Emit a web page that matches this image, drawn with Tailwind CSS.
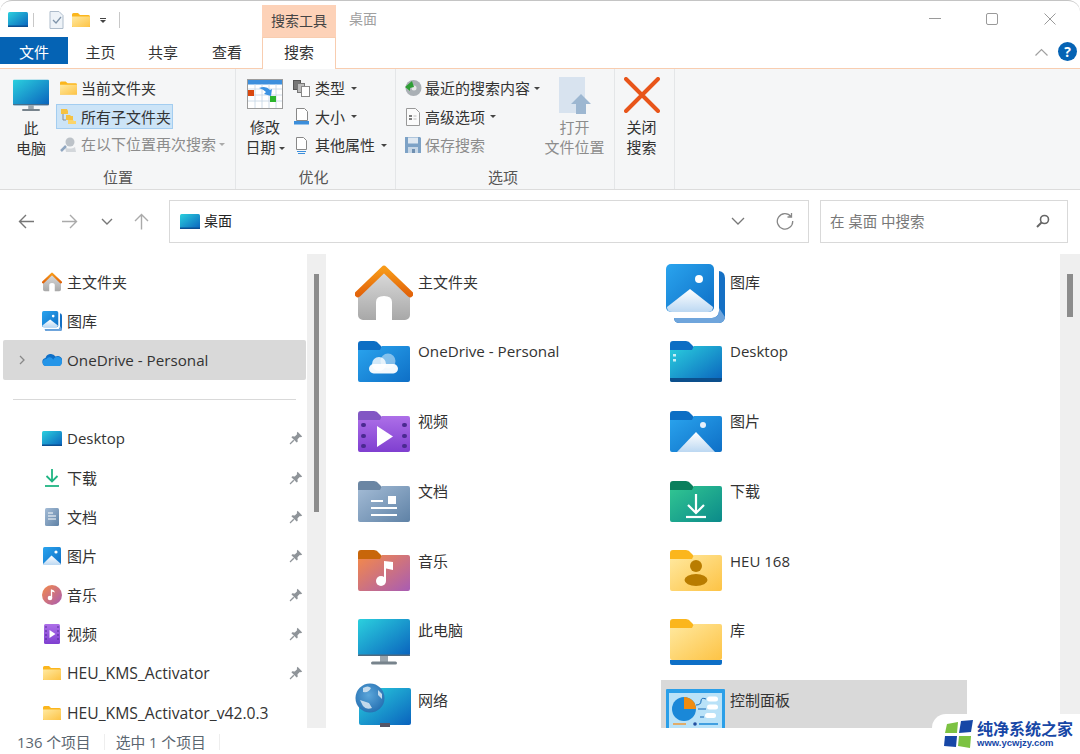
<!DOCTYPE html>
<html lang="zh-CN">
<head>
  <meta charset="UTF-8">
  <title>桌面</title>
  <script src="https://cdn.jsdelivr.net/npm/@tailwindcss/browser@4"></script>
</head>
<body class="bg-white">
  <!-- shared gradients and icons -->
  <svg class="absolute w-0 h-0">
    <defs>
      <linearGradient id="g-screen" x1="0" y1="0" x2="1" y2="1"><stop offset="0" stop-color="#2bd0de"/><stop offset="1" stop-color="#0a62bd"/></linearGradient>
      <linearGradient id="g-blue" x1="0" y1="0" x2="1" y2="1"><stop offset="0" stop-color="#2aa4ee"/><stop offset="1" stop-color="#0e6fc6"/></linearGradient>
      <linearGradient id="g-purple" x1="0" y1="0" x2="0" y2="1"><stop offset="0" stop-color="#ad6fe8"/><stop offset="1" stop-color="#7f3fd0"/></linearGradient>
      <linearGradient id="g-slate" x1="0" y1="0" x2="1" y2="1"><stop offset="0" stop-color="#a4bcd6"/><stop offset="1" stop-color="#5f82a6"/></linearGradient>
      <linearGradient id="g-music" x1="0" y1="0" x2="1" y2="1"><stop offset="0" stop-color="#f58a48"/><stop offset="1" stop-color="#a85cb4"/></linearGradient>
      <linearGradient id="g-green" x1="0" y1="0" x2="1" y2="1"><stop offset="0" stop-color="#32c792"/><stop offset="1" stop-color="#0b8a8a"/></linearGradient>
      <linearGradient id="g-yellow" x1="0" y1="0" x2="1" y2="1"><stop offset="0" stop-color="#ffe9a0"/><stop offset="1" stop-color="#fdc345"/></linearGradient>
      <linearGradient id="g-house" x1="0" y1="0" x2="0" y2="1"><stop offset="0" stop-color="#dcdcdc"/><stop offset="1" stop-color="#a8a8a8"/></linearGradient>
      <linearGradient id="g-roof" x1="0" y1="0" x2="0" y2="1"><stop offset="0" stop-color="#f79a18"/><stop offset="1" stop-color="#e2640a"/></linearGradient>
      <linearGradient id="g-mount" x1="0" y1="0" x2="0" y2="1"><stop offset="0" stop-color="#ffffff"/><stop offset="1" stop-color="#bcd8f2"/></linearGradient>
      <radialGradient id="g-globe" cx=".45" cy=".4" r=".7"><stop offset="0" stop-color="#5ba6da"/><stop offset="1" stop-color="#1f69ad"/></radialGradient>
      <symbol id="i-house" viewBox="0 0 58 56">
        <path d="M3 26 29 5l26 21v24a5 5 0 0 1-5 5H37V37q0-6-8-6t-8 6v18H8a5 5 0 0 1-5-5z" fill="url(#g-house)"/>
        <path d="M3 29 29 4l26 25" fill="none" stroke="url(#g-roof)" stroke-width="6.500" stroke-linecap="round" stroke-linejoin="round"/>
      </symbol>
      <symbol id="i-gallery" viewBox="0 0 59 59">
        <path d="M53 7q6 1 6 7v39a6 6 0 0 1-6 6H14q-6 0-6-5h38a7 7 0 0 0 7-7z" fill="#1570c4"/>
        <path d="M8 54h38a7 7 0 0 0 7-7v-3l6 9a6 6 0 0 1-6 6H14q-6 0-6-5z" fill="#6fa5dc"/>
        <rect x="0" y="0" width="48" height="48" rx="5" fill="url(#g-blue)"/>
        <path d="M1 43 24 25l23 18q0 5-5 5H6q-5 0-5-5z" fill="url(#g-mount)"/>
        <circle cx="33" cy="15" r="4" fill="#fff"/>
      </symbol>
      <symbol id="i-screen" viewBox="0 0 20 15">
        <rect width="20" height="15" rx="1.500" fill="url(#g-screen)"/>
        <rect y="13.500" width="20" height="1.500" fill="#0c4f92"/>
      </symbol>
      <symbol id="i-yellow" viewBox="0 0 18 14">
        <path d="M0 1.500A1.500 1.500 0 0 1 1.500 0H6l2 2h8.500A1.500 1.500 0 0 1 18 3.500V14H0z" fill="#fbb61d"/>
        <path d="M0 3.500h18V13a1 1 0 0 1-1 1H1a1 1 0 0 1-1-1z" fill="url(#g-yellow)"/>
      </symbol>
      <symbol id="i-pin" viewBox="0 0 14 14">
        <path d="M8.600.8 13.200 5.400 11.900 6.200 10.800 5.900 8.500 8.200 8.700 10.700 7.700 11.600 2.400 6.300 3.300 5.300 5.800 5.500 8.100 3.200 7.800 2.100zM4.300 8.700 5.300 9.700 1.400 13.400.6 12.600z" fill="#8f9499"/>
      </symbol>
      <symbol id="i-picture" viewBox="0 0 18 18">
        <rect width="18" height="18" rx="1.500" fill="url(#g-blue)"/>
        <path d="M0 17 8.500 8.500 18 17v1H0z" fill="url(#g-mount)"/>
        <circle cx="13" cy="5" r="1.600" fill="#fff"/>
      </symbol>
      <symbol id="i-monitor" viewBox="0 0 52 46">
        <rect width="52" height="37" rx="2" fill="url(#g-screen)"/>
        <rect y="35.500" width="52" height="1.500" fill="#4f6a80"/>
        <rect x="22" y="37" width="8" height="6" fill="#9aa5ad"/>
        <rect x="13" y="42.500" width="26" height="3" rx="1.500" fill="#77838c"/>
      </symbol>
    </defs>
  </svg>

  <div class="relative w-[1080px] h-[754px] overflow-hidden flex flex-col bg-white rounded-t-[12px] border-t border-[#c4c4c4] text-[15px] leading-[20px] text-[#333] font-['Open_Sans','Noto_Sans_CJK_SC',sans-serif]">

    <!-- title bar -->
    <div class="h-[36px] flex items-start">
      <div class="flex items-center h-[36px] pl-[8px] pt-[1px] w-[262px] shrink-0">
        <svg class="w-[20px] h-[15px]"><use href="#i-screen"/></svg>
        <div class="w-px h-[14px] bg-[#c8c8c8] ml-[5px]"></div>
        <svg class="w-[15px] h-[18px] ml-[15px]" viewBox="0 0 15 18">
          <path d="M1 .5h9l4 4v13H1z" fill="#eef3f8" stroke="#aebccb"/>
          <path d="m4 9 3 3 5-6" fill="none" stroke="#7f94aa" stroke-width="1.300"/>
        </svg>
        <svg class="w-[18px] h-[14px] ml-[8px]"><use href="#i-yellow"/></svg>
        <div class="ml-[10px] flex flex-col items-center gap-[1px] pt-[2px]">
          <div class="w-[6px] h-px bg-[#444]"></div>
          <div class="w-0 h-0 border-x-[3px] border-x-transparent border-t-[3px] border-t-[#444]"></div>
        </div>
        <div class="w-px h-[16px] bg-[#c8c8c8] ml-[13px]"></div>
      </div>
      <div class="w-[74px] h-[32px] mt-[4px] bg-[#fdd2b8] flex items-center justify-center text-[14px] text-[#444] shrink-0">搜索工具</div>
      <div class="ml-[13px] mt-[8px] text-[14px] text-[#a0a0a0]">桌面</div>
      <div class="ml-auto flex items-center h-[36px] pb-[1px]">
        <div class="w-[12px] h-px bg-[#9a9a9a]"></div>
        <div class="w-[12px] h-[12px] ml-[45px] border border-[#9a9a9a] rounded-[2px]"></div>
        <svg class="w-[12px] h-[12px] ml-[46px] mr-[24px]" viewBox="0 0 12 12"><path d="m.5.5 11 11m0-11-11 11" stroke="#9a9a9a" fill="none"/></svg>
      </div>
    </div>

    <!-- ribbon tabs -->
    <div class="h-[32px] flex items-start border-b border-[#f8cdb0] relative">
      <div class="w-[68px] h-[27px] bg-[#0563b4] text-white flex items-center justify-center pt-[2px] shrink-0">文件</div>
      <div class="w-[64px] h-[29px] flex items-center justify-center shrink-0 ml-[-1px]">
        <span class="ml-[3px]">主页</span>
      </div>
      <div class="w-[64px] h-[29px] flex items-center justify-center shrink-0">共享</div>
      <div class="w-[64px] h-[29px] flex items-center justify-center shrink-0">查看</div>
      <div class="w-[74px] h-[32px] bg-white border-x border-t border-[#f8cdb0] flex items-center justify-center pb-[3px] shrink-0 ml-[3px]">搜索</div>
      <div class="ml-auto flex items-center h-[31px] pb-[2px]">
        <svg class="w-[13px] h-[8px]" viewBox="0 0 13 8"><path d="M.5 7.500 6.500 1.500l6 6" fill="none" stroke="#a0a0a0" stroke-width="1.200"/></svg>
        <div class="w-[19px] h-[19px] rounded-full bg-[#0563b4] text-white font-bold text-[14px] flex items-center justify-center ml-[10px] mr-[3px]">?</div>
      </div>
    </div>

    <!-- ribbon -->
    <div class="h-[121px] bg-[#f5f6f7] border-b border-[#dcdcdc] flex text-[15px]">

      <!-- 位置 -->
      <div class="w-[236px] border-r border-[#e4e6e8] flex flex-col shrink-0">
        <div class="h-[98px] flex">
          <div class="w-[56px] pl-[6px] pt-[10px] flex flex-col items-center shrink-0">
            <svg class="w-[36px] h-[33px]" viewBox="0 0 52 46"><use href="#i-monitor"/></svg>
            <div class="mt-[6px] text-center leading-[20px]">此<br>电脑</div>
          </div>
          <div class="pt-[7px] flex flex-col">
            <div class="h-[24px] flex items-center pl-[4px]">
              <svg class="w-[17px] h-[14px]"><use href="#i-yellow"/></svg>
              <span class="ml-[4px]">当前文件夹</span>
            </div>
            <div class="h-[25px] w-[117px] mt-[4px] flex items-center pl-[3px] bg-[#cce4f7] border border-[#a3cdf0]">
              <svg class="w-[17px] h-[17px]" viewBox="0 0 17 17">
                <path d="M1 1h6l1 2H8v3H1z" fill="#f5c243"/><path d="M3 6v6h3" fill="none" stroke="#8c8c8c"/>
                <path d="M6 7h4l1 1h2v4H6z" fill="#f5c243"/><path d="M8 12h5l1 1h2v3H8z" fill="#fbd46a"/>
              </svg>
              <span class="ml-[4px] whitespace-nowrap text-[#333]">所有子文件夹</span>
            </div>
            <div class="h-[24px] mt-[3px] flex items-center pl-[4px] text-[#8c8c8c]">
              <svg class="w-[17px] h-[17px]" viewBox="0 0 17 17"><circle cx="10" cy="6" r="4.500" fill="#bcc2c8"/><path d="M5 11c2 2 7 2 10 0l1 5H6z" fill="#d3d7db"/><path d="M6 10 1 15" stroke="#8fa6c0" stroke-width="2.500"/></svg>
              <span class="ml-[4px] whitespace-nowrap">在以下位置再次搜索</span>
              <div class="ml-[3px] w-0 h-0 border-x-[3px] border-x-transparent border-t-[3px] border-t-[#aaa] shrink-0"></div>
            </div>
          </div>
        </div>
        <div class="text-center text-[#555] pl-[1px]">位置</div>
      </div>

      <!-- 优化 -->
      <div class="w-[160px] border-r border-[#e4e6e8] flex flex-col shrink-0">
        <div class="h-[98px] flex">
          <div class="w-[57px] pl-[1px] pt-[10px] flex flex-col items-center shrink-0">
            <svg class="w-[36px] h-[30px]" viewBox="0 0 36 30">
              <rect x=".5" y=".5" width="35" height="29" fill="#fff" stroke="#9c9c9c"/>
              <rect x="1" y="1" width="34" height="4.500" fill="#3d8fdd"/>
              <path d="M1 10h34M1 16h34M1 22h34M8 5v24M15 5v24M22 5v24M29 5v24" stroke="#c4d4e4" stroke-width=".8"/>
              <rect x="1" y="11" width="6" height="6" fill="#d9480f"/><rect x="23" y="17" width="6" height="6" fill="#2cb52c"/>
              <path d="M12 9q7-3 11 2l2-1-1 7-7-2 2-2q-3-3-7-4z" fill="#3b92e2"/>
            </svg>
            <div class="mt-[8px] text-center leading-[20px] whitespace-nowrap">修改<br>日期<span class="inline-block ml-[3px] align-middle w-0 h-0 border-x-[3px] border-x-transparent border-t-[3px] border-t-[#444]"></span></div>
          </div>
          <div class="pt-[7px] flex flex-col">
            <div class="h-[24px] flex items-center">
              <svg class="w-[17px] h-[17px]" viewBox="0 0 17 17"><rect x=".5" y=".5" width="7" height="9" fill="#777" stroke="#555"/><rect x="4.500" y="3.500" width="7" height="9" fill="#bbb" stroke="#777"/><rect x="8.500" y="6.500" width="8" height="10" fill="#fff" stroke="#888"/></svg>
              <span class="ml-[5px]">类型</span>
              <div class="ml-[6px] w-0 h-0 border-x-[3px] border-x-transparent border-t-[3px] border-t-[#444]"></div>
            </div>
            <div class="h-[25px] mt-[4px] flex items-center">
              <svg class="w-[17px] h-[17px]" viewBox="0 0 17 17"><path d="M3.500 .5h8l3 3v9h-11z" fill="#fff" stroke="#888"/><rect x="1" y="13" width="15" height="3.500" fill="#3b8edb"/></svg>
              <span class="ml-[5px]">大小</span>
              <div class="ml-[6px] w-0 h-0 border-x-[3px] border-x-transparent border-t-[3px] border-t-[#444]"></div>
            </div>
            <div class="h-[24px] mt-[4px] flex items-center">
              <svg class="w-[17px] h-[17px]" viewBox="0 0 17 17"><path d="M3.500 .5h7l3 3v9h-10z" fill="#fff" stroke="#888"/><path d="M4 14.500h9M5 16.500h7" stroke="#3b8edb"/></svg>
              <span class="ml-[5px] whitespace-nowrap">其他属性</span>
              <div class="ml-[6px] w-0 h-0 border-x-[3px] border-x-transparent border-t-[3px] border-t-[#444]"></div>
            </div>
          </div>
        </div>
        <div class="text-center text-[#555] pr-[4px]">优化</div>
      </div>

      <!-- 选项 -->
      <div class="w-[219px] border-r border-[#e4e6e8] flex flex-col shrink-0">
        <div class="h-[98px] flex">
          <div class="w-[150px] pl-[8px] pt-[7px] flex flex-col shrink-0">
            <div class="h-[24px] flex items-center">
              <svg class="w-[18px] h-[18px]" viewBox="0 0 18 18"><circle cx="9.500" cy="9" r="8" fill="#aab0b5"/><circle cx="10" cy="9" r="2.500" fill="#e8e8e8"/><path d="M8 2 1 8l5 4V9l4-1z" fill="#2f9e35"/></svg>
              <span class="ml-[3px] whitespace-nowrap">最近的搜索内容</span>
              <div class="ml-[4px] w-0 h-0 border-x-[3px] border-x-transparent border-t-[3px] border-t-[#444] shrink-0"></div>
            </div>
            <div class="h-[25px] mt-[4px] flex items-center">
              <svg class="w-[18px] h-[18px]" viewBox="0 0 18 18"><path d="M2.500 .5h9l4 4v13h-13z" fill="#fbfbfb" stroke="#999"/><path d="M5 8h3M5 11h3" stroke="#555" stroke-width="1.300"/><path d="M9.500 8h3M9.500 11h3" stroke="#bbb"/></svg>
              <span class="ml-[3px] whitespace-nowrap">高级选项</span>
              <div class="ml-[5px] w-0 h-0 border-x-[3px] border-x-transparent border-t-[3px] border-t-[#444] shrink-0"></div>
            </div>
            <div class="h-[24px] mt-[4px] flex items-center text-[#8c8c8c]">
              <svg class="w-[18px] h-[18px]" viewBox="0 0 18 18"><path d="M1 1h15l1 1v15H1z" fill="#7da2c6"/><rect x="4" y="1.500" width="10" height="6" fill="#dfe8f1"/><rect x="4" y="11" width="10" height="6" fill="#c6d6e6"/><rect x="8" y="13" width="3" height="4" fill="#6f8fb0"/></svg>
              <span class="ml-[3px] whitespace-nowrap">保存搜索</span>
            </div>
          </div>
          <div class="w-[57px] pt-[8px] flex flex-col items-center shrink-0 text-[#8c8c8c]">
            <svg class="w-[33px] h-[37px]" viewBox="0 0 33 37">
              <rect x="1" y="0" width="26" height="36" fill="#d8e3ef"/>
              <path d="M20 17 30 27h-5v10h-10V27h-5z" fill="#9db7d1" transform="translate(3 0)"/>
            </svg>
            <div class="mt-[3px] text-center leading-[20px] whitespace-nowrap">打开<br>文件位置</div>
          </div>
        </div>
        <div class="text-center text-[#555] pr-[4px]">选项</div>
      </div>

      <!-- 关闭搜索 -->
      <div class="w-[60px] border-r border-[#e4e6e8] pt-[8px] pr-[6px] flex flex-col items-center shrink-0">
        <svg class="w-[36px] h-[36px]" viewBox="0 0 36 36"><path d="m2 2 32 32M34 2 2 34" stroke="#e8551a" stroke-width="4" stroke-linecap="round"/></svg>
        <div class="mt-[4px] text-center leading-[20px]">关闭<br>搜索</div>
      </div>
    </div>

    <!-- navigation -->
    <div class="h-[64px] flex items-center shrink-0 pb-[2px]">
      <div class="w-[169px] flex items-center shrink-0">
        <svg class="w-[17px] h-[15px] ml-[18px]" viewBox="0 0 17 15"><path d="M16 7.500H1.500M8 1 1.500 7.500 8 14" fill="none" stroke="#777" stroke-width="1.400"/></svg>
        <svg class="w-[17px] h-[15px] ml-[26px]" viewBox="0 0 17 15"><path d="M1 7.500h14.500M9 1l6.500 6.500L9 14" fill="none" stroke="#aaa" stroke-width="1.400"/></svg>
        <svg class="w-[12px] h-[7px] ml-[23px]" viewBox="0 0 12 7"><path d="m1 1 5 5 5-5" fill="none" stroke="#777" stroke-width="1.400"/></svg>
        <svg class="w-[15px] h-[17px] ml-[21px]" viewBox="0 0 15 17"><path d="M7.500 16.500V1.500M1 8l6.500-6.500L14 8" fill="none" stroke="#aaa" stroke-width="1.400"/></svg>
      </div>
      <div class="w-[640px] h-[43px] border border-[#d9d9d9] flex items-center pl-[10px] shrink-0">
        <svg class="w-[20px] h-[15px]"><use href="#i-screen"/></svg>
        <span class="ml-[4px] text-[14px] text-[#222]">桌面</span>
        <svg class="w-[14px] h-[8px] ml-auto" viewBox="0 0 14 8"><path d="m1 1 6 6 6-6" fill="none" stroke="#777" stroke-width="1.300"/></svg>
        <svg class="w-[18px] h-[18px] ml-[31px] mr-[14px]" viewBox="0 0 18 18"><path d="M15 4.500A7.700 7.700 0 1 0 16.700 9M15.500 1v4h-4" fill="none" stroke="#888" stroke-width="1.300"/></svg>
      </div>
      <div class="w-[248px] h-[43px] ml-[11px] border border-[#d9d9d9] flex items-center pl-[9px] text-[14.500px] text-[#777] shrink-0">
        <span class="pt-[2px]">在 桌面 中搜索</span>
        <svg class="w-[14px] h-[14px] ml-auto mr-[17px]" viewBox="0 0 14 14"><circle cx="8.500" cy="5.500" r="4" fill="none" stroke="#666" stroke-width="1.600"/><path d="M5.500 8.500 1 13" stroke="#666" stroke-width="2"/></svg>
      </div>
    </div>

    <!-- main -->
    <div class="h-[474px] flex overflow-hidden shrink-0">

      <!-- sidebar -->
      <div class="w-[307px] pt-[8px] pl-[3px] shrink-0">
        <div class="h-[39.200px] flex items-center pl-[39px]">
          <svg class="w-[20px] h-[20px]"><use href="#i-house"/></svg><span class="ml-[5px]">主文件夹</span>
        </div>
        <div class="h-[39.200px] flex items-center pl-[39px]">
          <svg class="w-[20px] h-[20px]"><use href="#i-gallery"/></svg><span class="ml-[5px]">图库</span>
        </div>
        <div class="h-[39.200px] w-[303px] flex items-center bg-[#d9d9d9] rounded-[2px]">
          <svg class="w-[6px] h-[10px] ml-[16px]" viewBox="0 0 6 10"><path d="m1 1 4 4-4 4" fill="none" stroke="#888" stroke-width="1.300"/></svg>
          <svg class="w-[20px] h-[13px] ml-[17px]" viewBox="0 0 20 13"><path d="M4.500 13a4 4 0 0 1-1-7.900A5.500 5.500 0 0 1 13.500 3.500 4.600 4.600 0 0 1 19.800 9.500 3.500 3.500 0 0 1 16 13z" fill="#0f6fc6"/><path d="M4.500 13a3.500 3.500 0 0 1-.3-7 4 4 0 0 1 7 .8 4 4 0 0 1 8.600 3A3.500 3.500 0 0 1 16 13z" fill="#2495e8"/></svg>
          <span class="ml-[5px] whitespace-nowrap text-[15.200px]">OneDrive - Personal</span>
        </div>
        <div class="h-[39.200px] flex items-center pl-[10px]"><div class="w-[283px] h-px bg-[#d9d9d9]"></div></div>
        <div class="h-[39.200px] flex items-center pl-[39px]">
          <svg class="w-[20px] h-[15px]"><use href="#i-screen"/></svg><span class="ml-[5px]">Desktop</span>
          <svg class="w-[14px] h-[14px] ml-auto mr-[4px]"><use href="#i-pin"/></svg>
        </div>
        <div class="h-[39.200px] flex items-center pl-[39px]">
          <svg class="w-[20px] h-[20px]" viewBox="0 0 20 20"><path d="M10 1v12M4.500 8l5.500 5.500L15.500 8" fill="none" stroke="#20b583" stroke-width="1.800"/><path d="M3 18h14" stroke="#20b583" stroke-width="1.800"/></svg><span class="ml-[5px]">下载</span>
          <svg class="w-[14px] h-[14px] ml-auto mr-[4px]"><use href="#i-pin"/></svg>
        </div>
        <div class="h-[39.200px] flex items-center pl-[39px]">
          <svg class="w-[20px] h-[20px]" viewBox="0 0 20 20"><rect x="3" y="1" width="14" height="18" rx="1.500" fill="url(#g-slate)"/><path d="M6 6h5M6 9h8M6 12h8" stroke="#fff"/></svg><span class="ml-[5px]">文档</span>
          <svg class="w-[14px] h-[14px] ml-auto mr-[4px]"><use href="#i-pin"/></svg>
        </div>
        <div class="h-[39.200px] flex items-center pl-[39px]">
          <svg class="w-[18px] h-[18px] ml-[1px] mr-[1px]"><use href="#i-picture"/></svg><span class="ml-[5px]">图片</span>
          <svg class="w-[14px] h-[14px] ml-auto mr-[4px]"><use href="#i-pin"/></svg>
        </div>
        <div class="h-[39.200px] flex items-center pl-[39px]">
          <svg class="w-[20px] h-[20px]" viewBox="0 0 20 20"><circle cx="10" cy="10" r="10" fill="url(#g-music)"/><path d="M9.500 4.500v8.500" stroke="#fff" stroke-width="1.300"/><circle cx="8" cy="13" r="2.300" fill="#fff"/><path d="M9.500 4.500q3 .5 3.500 3-2-1-3.500-.7z" fill="#fff"/></svg><span class="ml-[5px]">音乐</span>
          <svg class="w-[14px] h-[14px] ml-auto mr-[4px]"><use href="#i-pin"/></svg>
        </div>
        <div class="h-[39.200px] flex items-center pl-[39px]">
          <svg class="w-[20px] h-[20px]" viewBox="0 0 20 20"><rect x="2" y="0" width="16" height="20" rx="1.500" fill="url(#g-purple)"/><path d="M3.500 3h1M3.500 7h1M3.500 11h1M3.500 15h1M15.500 3h1M15.500 7h1M15.500 11h1M15.500 15h1" stroke="#3c1c80" stroke-width="1.500"/><path d="m7.500 6 6 4-6 4z" fill="#fff"/></svg><span class="ml-[5px]">视频</span>
          <svg class="w-[14px] h-[14px] ml-auto mr-[4px]"><use href="#i-pin"/></svg>
        </div>
        <div class="h-[39.200px] flex items-center pl-[39px]">
          <svg class="w-[18px] h-[14px] ml-[1px] mr-[1px]"><use href="#i-yellow"/></svg><span class="ml-[5px] whitespace-nowrap text-[15.700px]">HEU_KMS_Activator</span>
          <svg class="w-[14px] h-[14px] ml-auto mr-[4px]"><use href="#i-pin"/></svg>
        </div>
        <div class="h-[39.200px] flex items-center pl-[39px]">
          <svg class="w-[18px] h-[14px] ml-[1px] mr-[1px]"><use href="#i-yellow"/></svg><span class="ml-[5px] whitespace-nowrap text-[15.700px]">HEU_KMS_Activator_v42.0.3</span>
        </div>
      </div>

      <!-- sidebar scrollbar -->
      <div class="w-[19px] bg-[#efefef] pt-[20px] pl-[7px] shrink-0">
        <div class="w-[5px] h-[238px] bg-[#8c8c8c]"></div>
      </div>

      <!-- tiles -->
      <div class="w-[734px] pl-[23px] pt-[8.400px] grid grid-cols-[312px_312px] auto-rows-[69.600px] shrink-0">
        <div class="w-[306px] h-[65px] flex">
          <div class="w-[69px] h-[62px] flex items-center justify-center shrink-0"><svg class="w-[58px] h-[56px]"><use href="#i-house"/></svg></div>
          <span class="pt-[10px]">主文件夹</span>
        </div>
        <div class="w-[306px] h-[65px] flex">
          <div class="w-[69px] h-[62px] flex items-center justify-center shrink-0"><svg class="w-[59px] h-[59px]"><use href="#i-gallery"/></svg></div>
          <span class="pt-[10px]">图库</span>
        </div>

        <div class="w-[306px] h-[65px] flex">
          <div class="w-[69px] h-[60px] flex items-center justify-center shrink-0">
            <svg class="w-[52px] h-[41px]" viewBox="0 0 52 41"><path d="M0 3a3 3 0 0 1 3-3h13q3 0 5 3l3 3h26v10H0z" fill="#0d6ec4"/><path d="M0 9l22 0 2-4h26a2 2 0 0 1 2 2v32a2 2 0 0 1-2 2H2a2 2 0 0 1-2-2z" fill="url(#g-blue)"/><circle cx="30" cy="20" r="7.500" fill="#fff" fill-opacity=".45"/><circle cx="21" cy="23" r="7" fill="#fff" fill-opacity=".8"/><rect x="11" y="23" width="29" height="9.500" rx="4.700" fill="#fff" fill-opacity=".95"/></svg>
          </div>
          <span class="pt-[9.500px] whitespace-nowrap text-[15.200px]">OneDrive - Personal</span>
        </div>
        <div class="w-[306px] h-[65px] flex">
          <div class="w-[69px] h-[60px] flex items-center justify-center shrink-0">
            <svg class="w-[52px] h-[41px]" viewBox="0 0 52 41"><path d="M0 3a3 3 0 0 1 3-3h13q3 0 5 3l3 3h26v10H0z" fill="#0d6ec4"/><path d="M0 9l22 0 2-4h26a2 2 0 0 1 2 2v32a2 2 0 0 1-2 2H2a2 2 0 0 1-2-2z" fill="url(#g-screen)"/><path d="M0 37h52v2a2 2 0 0 1-2 2H2a2 2 0 0 1-2-2z" fill="#0c4f8c"/><rect x="3" y="13" width="3" height="2.500" fill="#c8eef5"/><rect x="3" y="18" width="3" height="2.500" fill="#c8eef5"/></svg>
          </div>
          <span class="pt-[9.500px]">Desktop</span>
        </div>

        <div class="w-[306px] h-[65px] flex">
          <div class="w-[69px] h-[60px] flex items-center justify-center shrink-0">
            <svg class="w-[52px] h-[41px]" viewBox="0 0 52 41"><path d="M0 3a3 3 0 0 1 3-3h13q3 0 5 3l3 3h26v10H0z" fill="#8257c4"/><path d="M0 9l22 0 2-4h26a2 2 0 0 1 2 2v32a2 2 0 0 1-2 2H2a2 2 0 0 1-2-2z" fill="url(#g-purple)"/><path d="M19 15v21l16-10.500z" fill="#fff"/><path d="M5 14h1M5 25h1M5 35h1M46 14h1M46 25h1M46 35h1" stroke="#4a2a90" stroke-width="4" stroke-linecap="round"/></svg>
          </div>
          <span class="pt-[9px]">视频</span>
        </div>
        <div class="w-[306px] h-[65px] flex">
          <div class="w-[69px] h-[60px] flex items-center justify-center shrink-0">
            <svg class="w-[52px] h-[41px]" viewBox="0 0 52 41"><path d="M0 3a3 3 0 0 1 3-3h13q3 0 5 3l3 3h26v10H0z" fill="#0d6ec4"/><path d="M0 9l22 0 2-4h26a2 2 0 0 1 2 2v32a2 2 0 0 1-2 2H2a2 2 0 0 1-2-2z" fill="url(#g-blue)"/><path d="M7 41 26 21l19 20z" fill="url(#g-mount)"/><circle cx="33" cy="14" r="3" fill="#e6f1fb"/></svg>
          </div>
          <span class="pt-[9px]">图片</span>
        </div>

        <div class="w-[306px] h-[65px] flex">
          <div class="w-[69px] h-[60px] flex items-center justify-center shrink-0">
            <svg class="w-[52px] h-[41px]" viewBox="0 0 52 41"><path d="M0 3a3 3 0 0 1 3-3h13q3 0 5 3l3 3h26v10H0z" fill="#6b86a3"/><path d="M0 9l22 0 2-4h26a2 2 0 0 1 2 2v32a2 2 0 0 1-2 2H2a2 2 0 0 1-2-2z" fill="url(#g-slate)"/><path d="M13 20h12M13 27h26M13 34h26" stroke="#fff" stroke-width="2.200"/><rect x="30" y="15" width="8" height="8" fill="#fff"/></svg>
          </div>
          <span class="pt-[10px]">文档</span>
        </div>
        <div class="w-[306px] h-[65px] flex">
          <div class="w-[69px] h-[60px] flex items-center justify-center shrink-0">
            <svg class="w-[52px] h-[41px]" viewBox="0 0 52 41"><path d="M0 3a3 3 0 0 1 3-3h13q3 0 5 3l3 3h26v10H0z" fill="#0a7f5c"/><path d="M0 9l22 0 2-4h26a2 2 0 0 1 2 2v32a2 2 0 0 1-2 2H2a2 2 0 0 1-2-2z" fill="url(#g-green)"/><path d="M26 13v19M18 24l8 8 8-8" fill="none" stroke="#fff" stroke-width="2.200"/><path d="M16 36h20" stroke="#fff" stroke-width="2.200"/></svg>
          </div>
          <span class="pt-[10px]">下载</span>
        </div>

        <div class="w-[306px] h-[65px] flex">
          <div class="w-[69px] h-[60px] flex items-center justify-center shrink-0">
            <svg class="w-[52px] h-[41px]" viewBox="0 0 52 41"><path d="M0 3a3 3 0 0 1 3-3h13q3 0 5 3l3 3h26v10H0z" fill="#c8660a"/><path d="M0 9l22 0 2-4h26a2 2 0 0 1 2 2v32a2 2 0 0 1-2 2H2a2 2 0 0 1-2-2z" fill="url(#g-music)"/><circle cx="23" cy="31" r="5" fill="#fff"/><path d="M27 31V12" stroke="#fff" stroke-width="2"/><path d="M26 11l9 1v8l-9-2z" fill="#fff"/></svg>
          </div>
          <span class="pt-[10px]">音乐</span>
        </div>
        <div class="w-[306px] h-[65px] flex">
          <div class="w-[69px] h-[60px] flex items-center justify-center shrink-0">
            <svg class="w-[52px] h-[41px]" viewBox="0 0 52 41"><path d="M0 3a3 3 0 0 1 3-3h13q3 0 5 3l3 3h26v10H0z" fill="#fbb61d"/><path d="M0 9l22 0 2-4h26a2 2 0 0 1 2 2v32a2 2 0 0 1-2 2H2a2 2 0 0 1-2-2z" fill="url(#g-yellow)"/><circle cx="26" cy="16" r="6" fill="#b97c00"/><ellipse cx="26" cy="30" rx="11.500" ry="6" fill="#b97c00"/></svg>
          </div>
          <span class="pt-[10px]">HEU 168</span>
        </div>

        <div class="w-[306px] h-[65px] flex">
          <div class="w-[69px] h-[63px] flex items-center justify-center shrink-0"><svg class="w-[52px] h-[46px]"><use href="#i-monitor"/></svg></div>
          <span class="pt-[10px]">此电脑</span>
        </div>
        <div class="w-[306px] h-[65px] flex">
          <div class="w-[69px] h-[64px] flex items-center justify-center shrink-0">
            <svg class="w-[52px] h-[46px]" viewBox="0 0 52 46"><path d="M0 3a3 3 0 0 1 3-3h13q3 0 5 3l3 3h26v10H0z" fill="#fbb61d"/><path d="M0 9l22 0 2-4h26a2 2 0 0 1 2 2v32a2 2 0 0 1-2 2H2a2 2 0 0 1-2-2z" fill="url(#g-yellow)"/><path d="M0 41h52v3a2 2 0 0 1-2 2H2a2 2 0 0 1-2-2z" fill="#0e6fc6"/></svg>
          </div>
          <span class="pt-[10px]">库</span>
        </div>

        <div class="w-[306px] h-[65px] flex">
          <div class="w-[69px] h-[62px] flex items-start justify-center pt-[3px] pr-[2px] shrink-0">
            <div class="relative w-[56px] h-[50px]">
              <svg class="w-[52px] h-[42px] mt-[2px] ml-[4px]" viewBox="0 0 52 42"><rect width="52" height="37" y="3" rx="2" fill="url(#g-screen)"/><rect x="21" y="38" width="10" height="4" fill="#556"/></svg>
              <svg class="absolute left-0 top-0 w-[30px] h-[30px]" viewBox="0 0 30 30"><circle cx="15" cy="15" r="14.500" fill="url(#g-globe)"/><path d="M8 5q5-3 8 0-2 5-8 4zM5 17l9 3 3 5q-6 2-9-2zM23 7l4 4v5l-4-4z" fill="#dbe8f2" fill-opacity=".85"/></svg>
            </div>
          </div>
          <span class="pt-[10px]">网络</span>
        </div>
        <div class="w-[306px] h-[65px] flex bg-[#d9d9d9]">
          <div class="w-[69px] h-[65px] pt-[9px] flex justify-center shrink-0">
            <svg class="w-[59px] h-[46px]" viewBox="0 0 59 46"><rect width="59" height="46" rx="1" fill="#2b9fe8"/><rect x="3" y="4" width="53" height="42" fill="#b9e2f8"/><circle cx="18" cy="20" r="12" fill="#1a88d8"/><path d="M18 8a12 12 0 0 1 12 12H18z" fill="#f08c10"/><path d="M30 16q5 0 5-4t5-2M32 20h8M34 28h4" stroke="#1468b5" fill="none"/><rect x="41" y="7.500" width="11" height="5" rx="2.500" fill="#fff"/><rect x="41" y="15.500" width="11" height="5" rx="2.500" fill="#fff"/><rect x="39" y="24" width="11" height="5" rx="2.500" fill="#fff"/><path d="M7 35h13" stroke="#ef9a3a" stroke-width="1.500"/><circle cx="29" cy="35" r="1.800" fill="#2450a0"/><path d="M33 35h19" stroke="#1a88d8" stroke-width="1.500"/></svg>
          </div>
          <span class="pt-[10px]">控制面板</span>
        </div>
      </div>

      <!-- tiles scrollbar -->
      <div class="w-[20px] bg-[#efefef] pt-[20px] pl-[7px] shrink-0">
        <div class="w-[6px] h-[43px] bg-[#8c8c8c]"></div>
      </div>
    </div>

    <!-- status bar -->
    <div class="h-[26px] flex items-center bg-white text-[#5b6670] text-[14.800px] pl-[17px] pt-[2px] shrink-0">
      <span>136 个项目</span>
      <div class="w-px h-[16px] bg-[#eeeeee] ml-[13px]"></div>
      <span class="ml-[11px]">选中 1 个项目</span>
      <div class="w-px h-[16px] bg-[#eeeeee] ml-[13px]"></div>
    </div>

    <!-- watermark -->
    <div class="absolute right-0 bottom-0 w-[148px] h-[40px] bg-white rounded-tl-[14px] flex items-center pl-[12px]">
      <svg class="w-[30px] h-[30px]" viewBox="0 0 30 30">
        <path d="M3 5 14 3l-1 11H1z" fill="#7cc242"/><path d="M17 2 29 1l-2 12-12 1z" fill="#1747a6"/>
        <path d="M1 17h12l-1 11-12-1z" fill="#1747a6"/><path d="M15 17h12l-1 12-12-2z" fill="#7cc242"/>
      </svg>
      <div class="ml-[3px] flex flex-col gap-[2px] text-[#1747a6] font-bold">
        <span class="text-[16px] leading-[16px] whitespace-nowrap font-['Noto_Sans_CJK_SC',sans-serif]">纯净系统之家</span>
        <span class="text-[9.500px] leading-[10px] whitespace-nowrap font-['Liberation_Sans',sans-serif]">www.ycwjzy.com</span>
      </div>
    </div>
  </div>
</body>
</html>
